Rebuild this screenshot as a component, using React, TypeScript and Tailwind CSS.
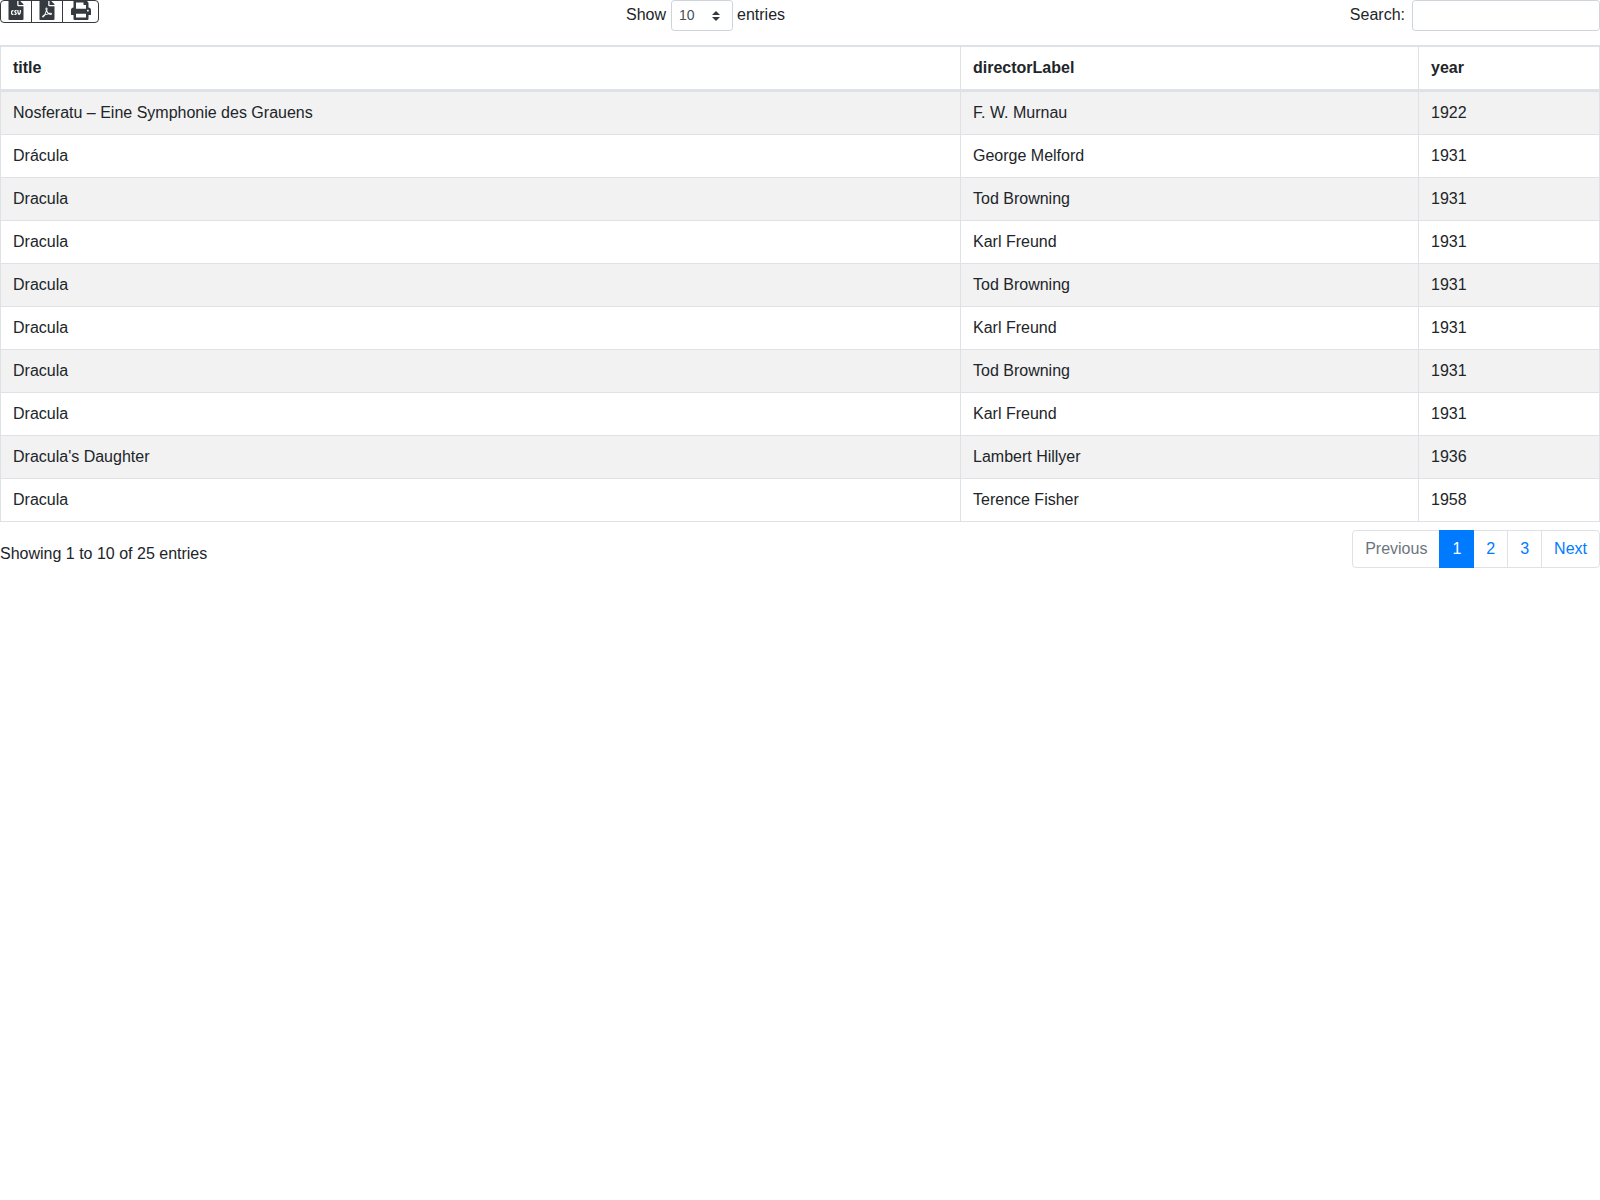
import { FaFileCsv, FaFilePdf, FaPrint } from 'react-icons/fa';

const rows = [
  ['Nosferatu – Eine Symphonie des Grauens', 'F. W. Murnau', '1922'],
  ['Drácula', 'George Melford', '1931'],
  ['Dracula', 'Tod Browning', '1931'],
  ['Dracula', 'Karl Freund', '1931'],
  ['Dracula', 'Tod Browning', '1931'],
  ['Dracula', 'Karl Freund', '1931'],
  ['Dracula', 'Tod Browning', '1931'],
  ['Dracula', 'Karl Freund', '1931'],
  ["Dracula's Daughter", 'Lambert Hillyer', '1936'],
  ['Dracula', 'Terence Fisher', '1958'],
];

export default function App() {
  return (
    <div className="min-h-screen bg-white text-base leading-6 text-[#212529] font-['Liberation_Sans',sans-serif]">
      <div className="grid grid-cols-[626px_1fr_auto] items-start h-[45px]">
        <div className="flex">
          <button className="flex h-[23px] w-8 items-start justify-center rounded-l-[4px] border border-[#343a40] text-[#343a40]">
            <FaFileCsv size={20} className="-mt-px" />
          </button>
          <button className="-ml-px flex h-[23px] w-8 items-start justify-center border border-[#343a40] text-[#343a40]">
            <FaFilePdf size={20} className="-mt-px" />
          </button>
          <button className="-ml-px flex h-[23px] w-[37px] items-start justify-center rounded-r-[4px] border border-[#343a40] text-[#343a40]">
            <FaPrint size={20} className="-mt-px" />
          </button>
        </div>
        <div className="flex items-start h-[31px]">
          <span className="pt-[3px]">Show</span>
          <div className="ml-[5px] mr-1 flex h-[31px] w-[62px] items-center justify-between rounded-[3.2px] border border-[#ced4da] pl-[7px] pr-3 text-sm text-[#495057]">
            <span className="-mt-px">10</span>
            <svg width="8" height="10" viewBox="0 0 8 11" preserveAspectRatio="none" fill="#343a40">
              <path d="M4 0 L8 4.5 L0 4.5 Z M0 6.5 L8 6.5 L4 11 Z" />
            </svg>
          </div>
          <span className="pt-[3px]">entries</span>
        </div>
        <div className="flex items-start gap-[7px] h-[31px]">
          <span className="pt-[3px]">Search:</span>
          <input className="h-[31px] w-[188px] rounded-[3.2px] border border-[#ced4da]" />
        </div>
      </div>

      <table className="w-full table-fixed border-collapse border border-[#dee2e6]">
        <colgroup>
          <col className="w-[960px]" />
          <col className="w-[458px]" />
          <col />
        </colgroup>
        <thead>
          <tr>
            {['title', 'directorLabel', 'year'].map((h) => (
              <th key={h} className="border border-t-2 border-b-[3px] border-[#dee2e6] px-3 py-[9px] text-left font-bold">
                {h}
              </th>
            ))}
          </tr>
        </thead>
        <tbody>
          {rows.map((r, i) => (
            <tr key={i} className={i % 2 === 0 ? 'bg-[#f2f2f2]' : 'bg-white'}>
              {r.map((c, j) => (
                <td key={j} className="border border-[#dee2e6] px-3 py-[9px]">
                  {c}
                </td>
              ))}
            </tr>
          ))}
        </tbody>
      </table>

      <div className="mt-2 flex items-start justify-between">
        <div className="pt-3">Showing 1 to 10 of 25 entries</div>
        <nav className="flex">
          <span className="rounded-l-[4px] border border-[#dee2e6] px-3 py-[6px] text-[#6c757d]">Previous</span>
          <span className="relative z-[1] -ml-px border border-[#007bff] bg-[#007bff] px-3 py-[6px] text-white">1</span>
          <span className="-ml-px border border-[#dee2e6] px-3 py-[6px] text-[#007bff]">2</span>
          <span className="-ml-px border border-[#dee2e6] px-3 py-[6px] text-[#007bff]">3</span>
          <span className="-ml-px rounded-r-[4px] border border-[#dee2e6] px-3 py-[6px] text-[#007bff]">Next</span>
        </nav>
      </div>
    </div>
  );
}
